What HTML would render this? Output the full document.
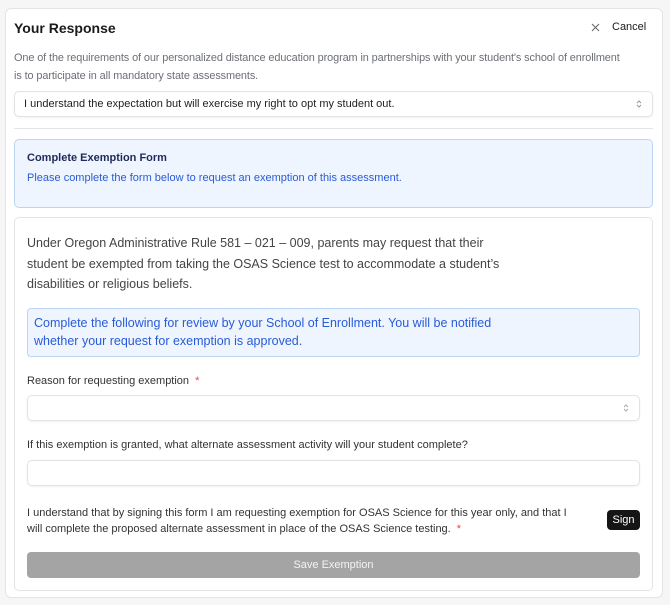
<!DOCTYPE html>
<html><head><style>
*{box-sizing:border-box;margin:0;padding:0}
body{width:670px;height:605px;background:#f6f6f6;font-family:"Liberation Sans",sans-serif;position:relative;overflow:hidden;color:#222}
.a{position:absolute}
.card{left:5px;top:8px;width:658px;height:590px;background:#fff;border:1px solid #e4e4e4;border-radius:6px}
.box{border:1px solid #e2e2e2;border-radius:5px;background:#fff;box-shadow:0 1px 2px rgba(0,0,0,.05)}
.chev{position:absolute;right:10px;top:50%;transform:translateY(-50%)}
.t11{font-size:11px;white-space:nowrap}
</style></head><body>
<div class="a card"></div>
<div class="a" style="left:14px;top:20px;font-size:14px;font-weight:bold;color:#1a1a1a">Your Response</div>
<svg class="a" style="left:591px;top:23px" width="9" height="9" viewBox="0 0 9 9"><path d="M1 1L8 8M8 1L1 8" stroke="#666" stroke-width="1"/></svg>
<div class="a t11" style="left:612px;top:21px;color:#1a1a1a">Cancel</div>
<div class="a t11" style="left:14px;top:49px;color:#6b6f76;line-height:18px;font-size:10.9px;letter-spacing:-.1px">One of the requirements of our personalized distance education program in partnerships with your student's school of enrollment<br>is to participate in all mandatory state assessments.</div>
<div class="a box" style="left:14px;top:91px;width:639px;height:26px"><div class="t11 a" style="left:9px;top:6px;color:#222">I understand the expectation but will exercise my right to opt my student out.</div><svg class="chev" width="6" height="10" viewBox="0 0 6 10"><path d="M1 4L3 2L5 4M1 6L3 8L5 6" stroke="#999" fill="none" stroke-width="1"/></svg></div>
<div class="a" style="left:14px;top:128px;width:639px;height:1px;background:#e4e4e4"></div>
<div class="a" style="left:14px;top:139px;width:639px;height:69px;background:#eef5fe;border:1px solid #bcd5f3;border-radius:5px"></div>
<div class="a t11" style="left:27px;top:152px;font-weight:bold;color:#1f2a5a">Complete Exemption Form</div>
<div class="a t11" style="left:27px;top:172px;color:#2a5bd7">Please complete the form below to request an exemption of this assessment.</div>
<div class="a" style="left:14px;top:217px;width:639px;height:374px;border:1px solid #e4e4e4;border-radius:5px;background:#fff"></div>
<div class="a" style="left:27px;top:233px;width:490px;font-size:12.5px;line-height:20.5px;color:#444">Under Oregon Administrative Rule 581 – 021 – 009, parents may request that their student be exempted from taking the OSAS Science test to accommodate a student’s disabilities or religious beliefs.</div>
<div class="a" style="left:27px;top:308px;width:613px;height:49px;background:#eef5fe;border:1px solid #bcd5f3;border-radius:4px"></div>
<div class="a" style="left:34px;top:314px;width:490px;font-size:12.5px;line-height:18px;color:#2a5bd7">Complete the following for review by your School of Enrollment. You will be notified whether your request for exemption is approved.</div>
<div class="a t11" style="left:27px;top:375px;color:#333">Reason for requesting exemption <span style="color:#e5484d;margin-left:3px">*</span></div>
<div class="a box" style="left:27px;top:395px;width:613px;height:26px"><svg class="chev" width="6" height="10" viewBox="0 0 6 10"><path d="M1 4L3 2L5 4M1 6L3 8L5 6" stroke="#aaa" fill="none" stroke-width="1"/></svg></div>
<div class="a t11" style="left:27px;top:439px;color:#333">If this exemption is granted, what alternate assessment activity will your student complete?</div>
<div class="a box" style="left:27px;top:460px;width:613px;height:26px"></div>
<div class="a" style="left:27px;top:506px;width:548px;font-size:11px;line-height:15.5px;color:#333">I understand that by signing this form I am requesting exemption for OSAS Science for this year only, and that I will complete the proposed alternate assessment in place of the OSAS Science testing. <span style="color:#e5484d;margin-left:3px">*</span></div>
<div class="a" style="left:607px;top:510px;width:33px;height:20px;background:#151515;border-radius:4px;color:#fff;font-size:11px;text-align:center;line-height:20px">Sign</div>
<div class="a" style="left:27px;top:552px;width:613px;height:26px;background:#a4a4a4;border-radius:4px;color:#f4f4f4;font-size:11px;text-align:center;line-height:26px">Save Exemption</div>
</body></html>
